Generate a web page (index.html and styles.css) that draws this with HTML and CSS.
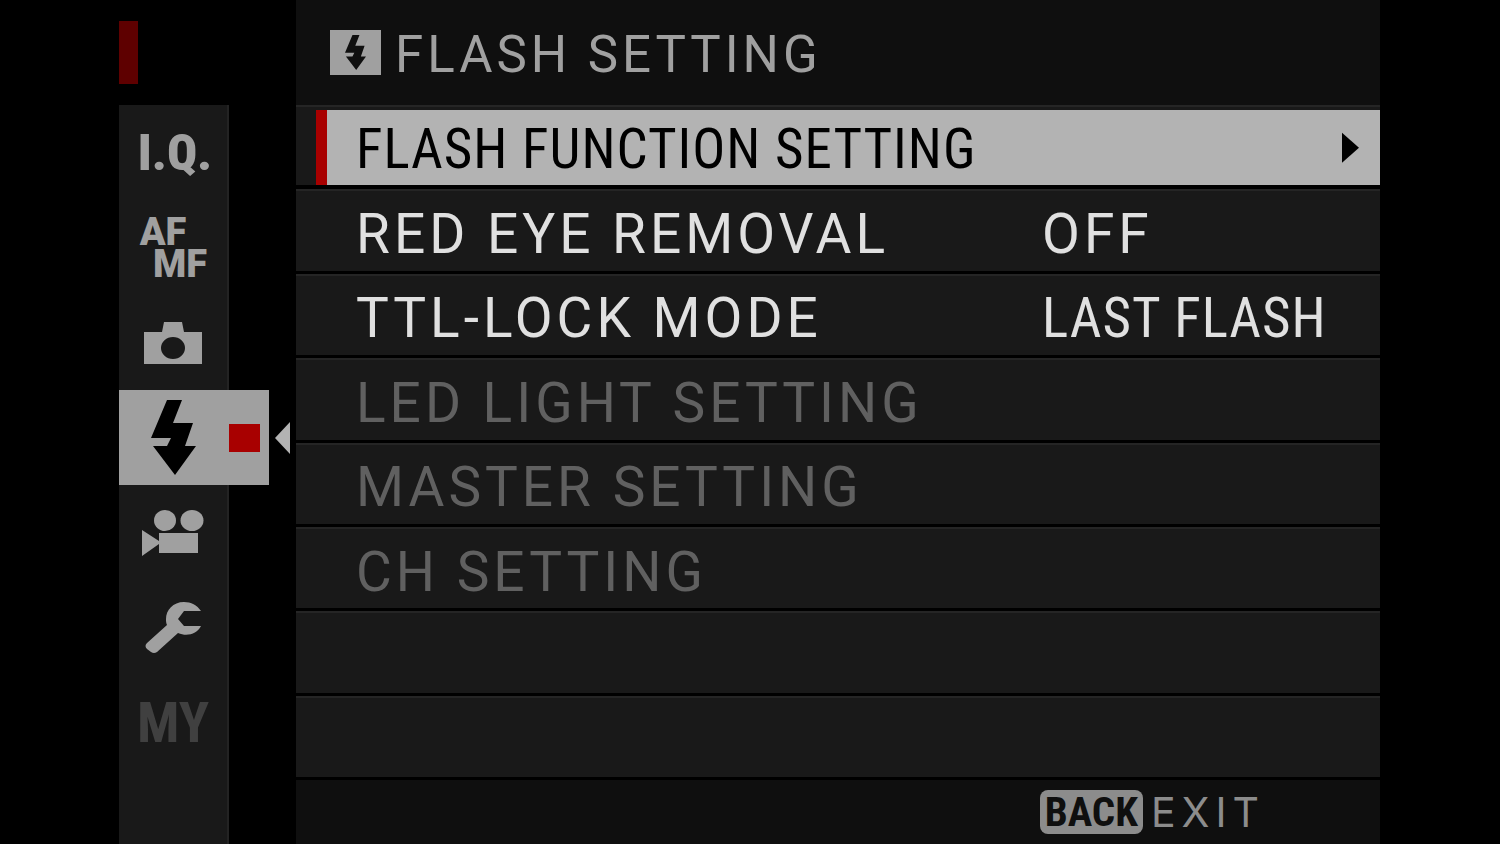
FILE: index.html
```html
<!DOCTYPE html>
<html lang="en">
<head>
<meta charset="utf-8">
<title>Flash Setting</title>
<link rel="stylesheet" href="styles.css">
</head>
<body>
<svg class="defs" aria-hidden="true">
  <symbol id="bolt" viewBox="0 0 45 75"><path d="M16 0H31L22 23H42L34 46H45L24 75L2 46H16L20 38H0Z"/></symbol>
</svg>
<div class="screen">
  <aside class="side">
    <div class="marker"></div>
    <nav class="tabs" aria-label="Menu categories">
      <button class="tab iq" type="button">I.Q.</button>
      <button class="tab focus" type="button"><span class="af">AF</span><span class="mf">MF</span></button>
      <button class="tab" type="button" aria-label="Shooting">
        <svg width="58" height="42" viewBox="0 0 58 42"><path fill-rule="evenodd" d="M20 0H38L40 10H58V42H0V10H18ZM29 15A12 11 0 1 0 29 37A12 11 0 1 0 29 15Z"/></svg>
      </button>
      <button class="tab active" type="button" aria-label="Flash">
        <span class="cell"><svg width="45" height="75"><use href="#bolt"/></svg></span>
        <span class="dot"></span>
        <svg class="pointer" width="15" height="32" viewBox="0 0 15 32"><path d="M15 0V32L0 16Z"/></svg>
      </button>
      <button class="tab" type="button" aria-label="Movie">
        <svg width="62" height="46" viewBox="0 0 62 46"><ellipse cx="23" cy="10.500" rx="11" ry="10.500"/><ellipse cx="50" cy="10.500" rx="11.500" ry="10.500"/><path d="M0 20L17 31V23H56V43H17V34L0 46Z"/></svg>
      </button>
      <button class="tab" type="button" aria-label="Set up">
        <svg width="56" height="52" viewBox="0 0 56 52"><path d="M56 9C52 3 46 0 39 0C28 0 21 8 21 17C21 19 21 21 22 23L2 41Q-1 44 2 47L6 50Q9 52 12 50L33 31C42 35 52 32 56 24H39L33 17L39 9Z"/></svg>
      </button>
      <button class="tab my" type="button" disabled>MY</button>
    </nav>
  </aside>
  <main class="panel">
    <header class="head">
      <span class="badge"><svg width="21" height="37"><use href="#bolt"/></svg></span>
      <h1 class="title">FLASH SETTING</h1>
    </header>
    <div class="rows">
      <button class="row selected" type="button"><span class="label narrow">FLASH FUNCTION SETTING</span><svg class="arrow" width="17" height="30" viewBox="0 0 17 30"><path d="M0 0V30L17 15Z"/></svg></button>
      <button class="row" type="button"><span class="label">RED EYE REMOVAL</span><span class="value">OFF</span></button>
      <button class="row" type="button"><span class="label">TTL-LOCK MODE</span><span class="value narrow">LAST FLASH</span></button>
      <button class="row" type="button" disabled><span class="label">LED LIGHT SETTING</span></button>
      <button class="row" type="button" disabled><span class="label">MASTER SETTING</span></button>
      <button class="row" type="button" disabled><span class="label">CH SETTING</span></button>
      <div class="row"></div>
      <div class="row"></div>
    </div>
    <footer class="foot">
      <button class="exit" type="button"><kbd class="key">BACK</kbd><span>EXIT</span></button>
    </footer>
  </main>
</div>
</body>
</html>
```
FILE: styles.css
```css
* { box-sizing: border-box; }
body {
  margin: 0;
  background: #000;
  font-family: Roboto, "Liberation Sans", sans-serif;
}
button {
  margin: 0;
  padding: 0;
  border: 0;
  background: none;
  font: inherit;
  letter-spacing: inherit;
  color: inherit;
  text-align: left;
}
svg { display: block; fill: currentColor; flex: none; }
.defs { position: absolute; width: 0; height: 0; }

.screen {
  display: grid;
  grid-template-columns: 110px minmax(0, 1fr);
  column-gap: 67px;
  min-height: 100vh;
  padding: 0 8% 0 calc(8% - 1px);
}

/* Category tabs */
.side { display: flex; flex-direction: column; }
.marker { width: 19px; height: 63px; margin: 21px 0; background: #5e0000; }
.tabs {
  flex: 1;
  display: flex;
  flex-direction: column;
  background: #191919;
  border-right: 2px solid #232323;
  color: #a0a0a0;
  font-weight: 700;
}
.tab {
  display: flex;
  align-items: center;
  justify-content: center;
  height: 95px;
}
.iq, .my {
  font-family: "Roboto Condensed", Roboto, sans-serif;
  line-height: 56px;
}
.iq { padding-left: 4px; font-size: 50px; font-weight: 900; }
.my { font-size: 56px; color: #404040; }
.focus {
  flex-direction: column;
  font-size: 38px;
  font-weight: 900;
  line-height: 32px;
}
.af { padding-right: 20px; }
.mf { padding-left: 14px; }
.active {
  position: relative;
  justify-content: flex-start;
  width: 150px;
  background: #a0a0a0;
  color: #000;
}
.cell { display: flex; justify-content: center; width: 110px; padding-right: 2px; }
.dot { width: 31px; height: 28px; background: #a80000; }
.pointer { position: absolute; left: 156px; color: #b3b3b3; }

/* Settings list */
.panel { display: flex; flex-direction: column; background: #0f0f0f; }
.head {
  display: flex;
  align-items: center;
  gap: 14px;
  height: 105px;
  padding-left: 34px;
  color: #a0a0a0;
}
.badge {
  display: flex;
  align-items: center;
  justify-content: center;
  width: 51px;
  height: 45px;
  background: #a0a0a0;
  color: #0f0f0f;
}
.title { margin: 0; padding-top: 3px; font-size: 51px; font-weight: 400; letter-spacing: 4px; }
.rows { flex: 1; display: grid; grid-auto-rows: minmax(72px, 1fr); color: #e0e0e0; }
.row {
  display: flex;
  align-items: center;
  padding: 6px 0 0 60px;
  background: #191919;
  border-top: 2px solid #252525;
  border-bottom: 3px solid #000;
  font-size: 55px;
  line-height: 64px;
  letter-spacing: 4px;
}
.row:disabled { color: #606060; }
.label { flex: 1; white-space: nowrap; }
.value { width: 33%; white-space: nowrap; }
.narrow {
  font-family: "Roboto Condensed", Roboto, sans-serif;
  letter-spacing: 1px;
}
.selected {
  padding: 3px 0 0 20px;
  border-bottom-width: 4px;
  color: #000;
}
.selected .label {
  align-self: stretch;
  display: flex;
  align-items: center;
  padding: 3px 0 0 29px;
  border-left: 11px solid #a80000;
  background: #b3b3b3;
}
.arrow { box-sizing: content-box; align-self: stretch; height: auto; padding-right: 21px; background: #b3b3b3; }

.foot {
  display: flex;
  justify-content: flex-end;
  align-items: center;
  height: 64px;
  padding-right: 115px;
  color: #8c8c8c;
}
.exit {
  display: flex;
  align-items: center;
  gap: 8px;
  font-family: Inter, Roboto, sans-serif;
  font-size: 41px;
  letter-spacing: 6px;
}
.key {
  padding: 0 5px;
  border-radius: 8px;
  background: #8c8c8c;
  color: #0f0f0f;
  font: 700 41px/44px "Roboto Condensed", Roboto, sans-serif;
  letter-spacing: 0;
}
```
